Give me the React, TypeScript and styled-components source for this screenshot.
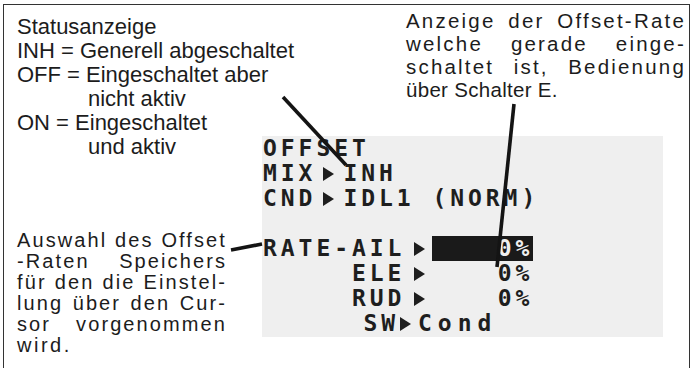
import React from 'react';
import styled, { createGlobalStyle } from 'styled-components';

const GlobalStyle = createGlobalStyle`
  html, body {
    margin: 0;
    padding: 0;
    background: #fff;
    overflow: hidden;
  }
`;

const Page = styled.div`
  width: 697px;
  height: 368px;
  padding: 4px 7px 0 3px;
  box-sizing: border-box;
`;

const Frame = styled.div`
  position: relative;
  height: 100%;
  box-sizing: border-box;
  border: 1px solid #333;
  border-bottom: none;
  display: flex;
  font-family: 'Liberation Sans', Arial, sans-serif;
  color: #1c1c1c;
`;

const LeftColumn = styled.div`
  width: 258px;
  flex-shrink: 0;
  display: flex;
  flex-direction: column;
  padding: 10px 0 0 13px;
  box-sizing: border-box;
`;

const Note = styled.div<{ $size: number; $lh: number; $w?: number }>`
  font-size: ${(p) => p.$size}px;
  line-height: ${(p) => p.$lh}px;
  ${(p) => (p.$w ? `width: ${p.$w}px;` : '')}
`;

const PlainLine = styled.div<{ $indent?: number }>`
  white-space: pre;
  padding-left: ${(p) => p.$indent || 0}px;
`;

// justified lines are set with some extra tracking, the last line with its own
const JustLine = styled.div<{ $last?: boolean; $ls: number; $lastLs: number }>`
  white-space: nowrap;
  text-align: justify;
  text-align-last: ${(p) => (p.$last ? 'left' : 'justify')};
  letter-spacing: ${(p) => (p.$last ? p.$lastLs : p.$ls)}px;
`;

const BottomNote = styled(Note)`
  margin-top: 71px;
`;

const RightArea = styled.div`
  flex: 1;
  display: flex;
  flex-direction: column;
`;

const TopNote = styled(Note)`
  align-self: flex-end;
  margin: 4px 3px 0 0;
`;

const Lcd = styled.div`
  margin-top: 35px;
  width: 401px;
  height: 201px;
  background: #efefef;
  padding-left: 1px;
  box-sizing: border-box;
  font-family: 'DejaVu Sans Mono', monospace;
  font-weight: bold;
  font-size: 23px;
  letter-spacing: 3.95px;
  color: #1e1e1e;
`;

const LcdRow = styled.div`
  display: flex;
  align-items: center;
  height: 25px;
  line-height: 25px;
  white-space: pre;
`;

const LcdLabel = styled.span<{ $w?: number }>`
  ${(p) => (p.$w ? `width: ${p.$w}px; text-align: right;` : '')}
`;

const Arrow = styled.span<{ $before: number; $after: number }>`
  width: 0;
  height: 0;
  border-left: 11px solid currentColor;
  border-top: 7px solid transparent;
  border-bottom: 7px solid transparent;
  margin: 0 ${(p) => p.$after}px 0 ${(p) => p.$before}px;
`;

const LcdValue = styled.span<{ $w?: number; $active?: boolean; $ls?: number }>`
  ${(p) => (p.$w ? `width: ${p.$w}px; text-align: right;` : '')}
  ${(p) => (p.$ls ? `letter-spacing: ${p.$ls}px;` : '')}
  background: ${(p) => (p.$active ? '#1a1a1a' : 'transparent')};
  color: ${(p) => (p.$active ? '#efefef' : 'inherit')};
`;

const Leaders = styled.svg`
  position: absolute;
  left: 0;
  top: 0;
  pointer-events: none;
`;

const statusLines = [
  { text: 'Statusanzeige', indent: 0 },
  { text: 'INH = Generell abgeschaltet', indent: 0 },
  { text: 'OFF = Eingeschaltet aber', indent: 0 },
  { text: 'nicht aktiv', indent: 71 },
  { text: 'ON = Eingeschaltet', indent: 0 },
  { text: 'und aktiv', indent: 71 },
];

const rateLines = [
  'Anzeige der Offset-Rate',
  'welche gerade einge-',
  'schaltet ist, Bedienung',
  'über Schalter E.',
];

const memoryLines = [
  'Auswahl des Offset',
  '-Raten Speichers',
  'für den die Einstel-',
  'lung über den Cur-',
  'sor vorgenommen',
  'wird.',
];

const rates = [
  { label: 'RATE-AIL', value: '0%', active: true },
  { label: 'ELE', value: '0%', active: false },
  { label: 'RUD', value: '0%', active: false },
];

const App = () => {
  return (
    <Page>
      <GlobalStyle />
      <Frame>
        <LeftColumn>
          <Note $size={22} $lh={24}>
            {statusLines.map((l) => (
              <PlainLine key={l.text} $indent={l.indent}>
                {l.text}
              </PlainLine>
            ))}
          </Note>
          <BottomNote $size={20} $lh={21} $w={210}>
            {memoryLines.map((l, i) => (
              <JustLine
                key={l}
                $ls={2.1}
                $lastLs={2.5}
                $last={i === memoryLines.length - 1}
              >
                {l}
              </JustLine>
            ))}
          </BottomNote>
        </LeftColumn>
        <RightArea>
          <TopNote $size={20.5} $lh={23} $w={280}>
            {rateLines.map((l, i) => (
              <JustLine
                key={l}
                $ls={2.2}
                $lastLs={0.3}
                $last={i === rateLines.length - 1}
              >
                {l}
              </JustLine>
            ))}
          </TopNote>
          <Lcd>
            <LcdRow>OFFSET</LcdRow>
            <LcdRow>
              <LcdLabel>MIX</LcdLabel>
              <Arrow $before={7} $after={9} />
              <LcdValue>INH</LcdValue>
            </LcdRow>
            <LcdRow>
              <LcdLabel>CND</LcdLabel>
              <Arrow $before={7} $after={9} />
              <LcdValue>IDL1 (NORM)</LcdValue>
            </LcdRow>
            <LcdRow />
            {rates.map((r) => (
              <LcdRow key={r.label}>
                <LcdLabel $w={142.4}>{r.label}</LcdLabel>
                <Arrow $before={9} $after={7} />
                <LcdValue $w={101} $active={r.active}>
                  {r.value}
                </LcdValue>
              </LcdRow>
            ))}
            <LcdRow>
              <LcdLabel $w={136}>SW</LcdLabel>
              <Arrow $before={1} $after={7} />
              <LcdValue $ls={6}>Cond</LcdValue>
            </LcdRow>
          </Lcd>
        </RightArea>
        <Leaders width={685} height={363} viewBox="4 5 685 363">
          <g stroke="#141414" strokeWidth={3.6} strokeLinecap="butt">
            <line x1={283} y1={97} x2={346} y2={165} />
            <line x1={514} y1={104} x2={497} y2={267} />
            <line x1={231} y1={250} x2={262} y2={244} />
          </g>
        </Leaders>
      </Frame>
    </Page>
  );
};

export default App;
